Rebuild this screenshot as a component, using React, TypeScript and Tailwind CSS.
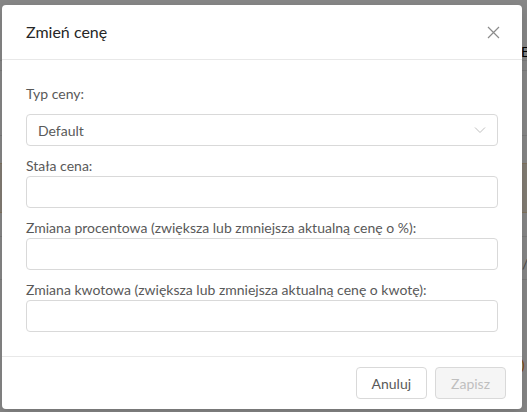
import React from "react";

function Page() {
  return (
    <div className="flex h-[412px] w-[527px] flex-col bg-white text-[14px] text-[#262626]">
      <div className="flex h-[61px] items-end border-b border-[#e8e8e8] pl-[521px]">
        <span className="pb-[1px] text-[14px] leading-none text-black">E</span>
      </div>
      <div className="h-[10px] border-b border-[#e8e8e8]" />
      <div className="h-[65px] border-b border-[#e8e8e8]" />
      <div className="h-[27px]" />
      <div className="h-[50px] border-y border-[#f3d9b0] bg-[#f7ecdc]" />
      <div className="h-[24px] border-b border-[#e8e8e8]" />
      <div className="flex h-[43px] items-end border-b border-[#e8e8e8] pb-[8px] pl-[522px]">
        <span className="leading-none text-[#8c8c8c]">/</span>
      </div>
      <div className="pl-[521px] pt-[74px]">
        <span className="leading-none text-[#fa8c16]">)</span>
      </div>
    </div>
  );
}

function Field({ label }: { label: string }) {
  return (
    <div className="mt-2.5 flex flex-col">
      <label className="text-[14px] leading-5 text-[#595959]">{label}</label>
      <input
        type="text"
        className="h-8 w-full rounded-[4px] border border-[#d9d9d9] bg-white px-[11px] text-[14px] text-[#595959] outline-none"
      />
    </div>
  );
}

export default function App() {
  return (
    <div className="relative h-[412px] w-[527px] overflow-hidden bg-white font-['Lato',sans-serif]">
      <Page />
      <div className="absolute inset-0 bg-black/[0.47]" />
      <div className="absolute left-[2px] top-[5px] flex w-[520px] flex-col rounded-[4px] bg-white shadow-[0_4px_12px_rgba(0,0,0,0.15)]">
        <div className="flex h-[55px] items-center justify-between border-b border-[#e8e8e8] pl-6 pr-[22px]">
          <span className="text-[16px] leading-[22px] font-normal text-[#262626]">Zmień cenę</span>
          <svg width="13" height="13" viewBox="0 0 13 13" fill="none">
            <path d="M1 1L12 12M12 1L1 12" stroke="#8c8c8c" strokeWidth="1.2" />
          </svg>
        </div>
        <div className="flex flex-col px-6 pb-6 pt-6">
          <div className="flex flex-col">
            <label className="text-[14px] leading-5 text-[#595959]">Typ ceny:</label>
            <div className="mt-2.5 flex h-8 w-full items-center justify-between rounded-[4px] border border-[#d9d9d9] bg-white pl-[11px] pr-[11px]">
              <span className="text-[14px] text-[#595959]">Default</span>
              <svg width="12" height="12" viewBox="0 0 12 12" fill="none">
                <path d="M1 3.5L6 8.5L11 3.5" stroke="#bfbfbf" strokeWidth="1" />
              </svg>
            </div>
          </div>
          <Field label="Stała cena:" />
          <Field label="Zmiana procentowa (zwiększa lub zmniejsza aktualną cenę o %):" />
          <Field label="Zmiana kwotowa (zwiększa lub zmniejsza aktualną cenę o kwotę):" />
        </div>
        <div className="flex justify-end gap-2 border-t border-[#e8e8e8] px-4 py-2.5">
          <button className="h-8 rounded-[4px] border border-[#d9d9d9] bg-white px-[15px] text-[14px] text-[#595959]">
            Anuluj
          </button>
          <button className="h-8 rounded-[4px] border border-[#d9d9d9] bg-[#f5f5f5] px-[15px] text-[14px] text-[#bfbfbf]">
            Zapisz
          </button>
        </div>
      </div>
    </div>
  );
}
